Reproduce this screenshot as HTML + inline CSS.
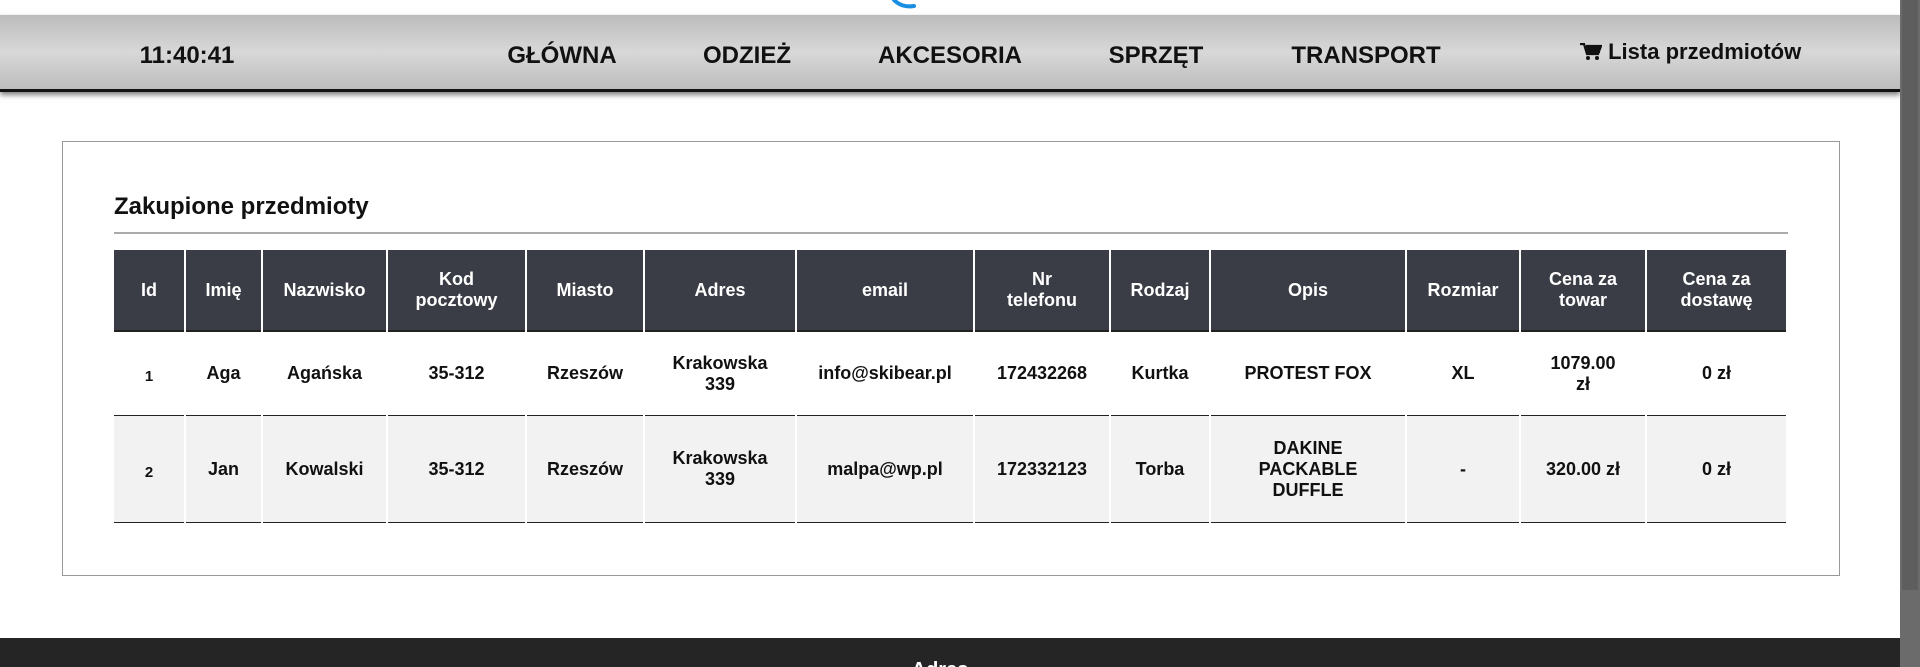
<!DOCTYPE html>
<html><head><meta charset="utf-8"><style>
*{margin:0;padding:0;box-sizing:border-box}
html,body{width:1920px;height:667px;overflow:hidden;background:#fff;font-family:"Liberation Sans",Arial,sans-serif;position:relative}
.nav{position:absolute;left:0;top:15px;width:1900px;height:77px;background:linear-gradient(#bcbcbc,#d8d8d8 50%,#bcbcbc);border-bottom:3px solid #111;box-shadow:0 3px 5px rgba(0,0,0,.5)}
.nav span{position:absolute;top:27px;font-weight:bold;font-size:24px;color:#111;transform:translateX(-50%);white-space:nowrap}
.nav .cart{transform:none;font-size:22px;top:24px}
.sb{position:absolute;right:0;top:0;width:20px;height:667px;background:#6b6b6b}
.sb i{position:absolute;left:2px;top:0;width:16px;height:590px;background:#5e5e5e}
.box{position:absolute;left:62px;top:141px;width:1778px;height:435px;border:1px solid #999}
h2{position:absolute;left:114px;top:193px;font-size:24px;font-weight:bold;color:#111}
.hr{position:absolute;left:114px;top:232px;width:1674px;height:2px;background:#aaa}
table{position:absolute;left:112px;top:250px;border-collapse:separate;border-spacing:2px 0;table-layout:fixed}
td,th{text-align:center;font-weight:bold;font-size:18px;line-height:21px;color:#111}
th{background:#3a3d45;color:#fff;height:82px;border-bottom:2px solid #222}
tr.r td{height:84px;border-bottom:1px solid #222}
tr.g td{background:#f2f2f2;height:107px}
td.id{font-size:15px;padding-top:6px}
.foot{position:absolute;left:0;top:638px;width:1900px;height:29px;background:#252525}
.foot span{position:absolute;left:940px;top:21px;transform:translateX(-50%);color:#fff;font-weight:bold;font-size:20px}
</style></head><body>
<svg style="position:absolute;left:888px;top:0" width="40" height="12"><path d="M6 0 Q14 8 26 6" stroke="#1a8ee0" stroke-width="4" fill="none" stroke-linecap="round"/></svg>
<div class="nav">
<span style="left:187px">11:40:41</span>
<span style="left:562px">GŁÓWNA</span>
<span style="left:747px">ODZIEŻ</span>
<span style="left:950px">AKCESORIA</span>
<span style="left:1156px">SPRZĘT</span>
<span style="left:1366px">TRANSPORT</span>
<span class="cart" style="left:1580px"><svg width="22" height="18" viewBox="0 0 22 18" style="vertical-align:-2px"><path d="M0 1h4l3 10h11l3-8H6" fill="none" stroke="#111" stroke-width="2.2"/><rect x="6" y="3" width="14" height="7" fill="#111"/><circle cx="8" cy="15" r="2" fill="#111"/><circle cx="17" cy="15" r="2" fill="#111"/></svg> Lista przedmiotów</span>
</div>
<div class="box"></div>
<h2>Zakupione przedmioty</h2>
<div class="hr"></div>
<table>
<colgroup><col style="width:70px"><col style="width:75px"><col style="width:123px"><col style="width:137px"><col style="width:116px"><col style="width:150px"><col style="width:176px"><col style="width:134px"><col style="width:98px"><col style="width:194px"><col style="width:112px"><col style="width:124px"><col style="width:139px"></colgroup>
<tr><th>Id</th><th>Imię</th><th>Nazwisko</th><th>Kod<br>pocztowy</th><th>Miasto</th><th>Adres</th><th>email</th><th>Nr<br>telefonu</th><th>Rodzaj</th><th>Opis</th><th>Rozmiar</th><th>Cena za<br>towar</th><th>Cena za<br>dostawę</th></tr>
<tr class="r"><td class="id">1</td><td>Aga</td><td>Agańska</td><td>35-312</td><td>Rzeszów</td><td>Krakowska<br>339</td><td>info@skibear.pl</td><td>172432268</td><td>Kurtka</td><td>PROTEST FOX</td><td>XL</td><td>1079.00<br>zł</td><td>0 zł</td></tr>
<tr class="r g"><td class="id">2</td><td>Jan</td><td>Kowalski</td><td>35-312</td><td>Rzeszów</td><td>Krakowska<br>339</td><td>malpa@wp.pl</td><td>172332123</td><td>Torba</td><td>DAKINE<br>PACKABLE<br>DUFFLE</td><td>-</td><td>320.00 zł</td><td>0 zł</td></tr>
</table>
<div class="foot"><span>Adres</span></div>
<div class="sb"><i></i></div>
</body></html>
